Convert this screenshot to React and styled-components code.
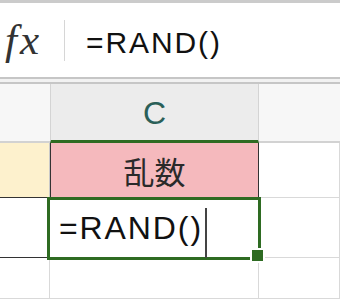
import React from 'react';
import styled, { createGlobalStyle } from 'styled-components';

const GREEN = '#2e6b22';

const Global = createGlobalStyle`
 html, body { margin: 0; padding: 0; background: #fff; }
 body { width: 340px; height: 299px; overflow: hidden; font-family: 'Liberation Sans', Arial, sans-serif; }
`;

const Screen = styled.div`
 width: 340px;
 height: 299px;
 display: flex;
 flex-direction: column;
 overflow: hidden;
`;

const FormulaBar = styled.div`
 height: 74px;
 border-top: 3px solid #cbcbcb;
 display: flex;
 align-items: center;
 background: #fff;
`;

const FxLabel = styled.div`
 width: 60px;
 padding-left: 5px;
 box-sizing: border-box;
 font-family: 'Liberation Serif', 'DejaVu Serif', serif;
 font-style: italic;
 font-size: 43px;
 letter-spacing: 3px;
 color: #333;
 line-height: 1;
 margin-top: -2px;
`;

const Divider = styled.div`
 width: 1px;
 height: 41px;
 background: #d6d6d6;
 margin-left: 4px;
 margin-right: 21px;
`;

const FormulaText = styled.div`
 flex: 1;
 font-size: 30px;
 letter-spacing: 1.9px;
 color: #111;
 line-height: 1;
 padding-top: 5px;
`;

const BarEdge = styled.div`
 height: 3px;
 border-top: 2px solid #c6c6c6;
 border-bottom: 2px solid #c6c6c6;
 background: #f2f2f2;
`;

const Sheet = styled.div`
 flex: 1;
 display: grid;
 grid-template-columns: 50px 209px 1fr;
 grid-template-rows: 59px 55px 60px 1fr;
`;

const Head = styled.div`
 box-sizing: border-box;
 background: ${p => (p.$active ? '#ececec' : '#f7f7f7')};
 border-bottom: ${p => (p.$active ? `3px solid ${GREEN}` : '2px solid #d2d2d2')};
 border-left: ${p => (p.$active ? '1px solid #d4d4d4' : 'none')};
 border-right: ${p => (p.$active ? '1px solid #d4d4d4' : 'none')};
 display: flex;
 align-items: center;
 justify-content: center;
 font-size: 32px;
 color: #2a5f58;
 padding-top: 2px;
`;

const Cell = styled.div`
 box-sizing: border-box;
 background: ${p => p.$bg || '#fff'};
 border-right: 1px solid ${p => p.$line || '#d9d9d9'};
 border-bottom: 1px solid ${p => p.$bottom || '#d9d9d9'};
 display: flex;
 align-items: center;
 justify-content: center;
`;

const LabelCell = styled(Cell)`
 border-left: 1px solid #333;
 border-right: 1px solid #333;
 font-family: 'Noto Sans CJK JP', 'Noto Sans CJK SC', sans-serif;
 font-size: 31px;
 color: #2a2a2a;
`;

const ActiveCell = styled.div`
 position: relative;
 z-index: 1;
 margin: -1px -2px -2px -3px;
 border: 3px solid ${GREEN};
 background: #fff;
 display: flex;
 align-items: center;
 padding-left: 9px;
 font-size: 32px;
 letter-spacing: 1.9px;
 color: #111;
`;

const Caret = styled.span`
 display: inline-block;
 width: 2px;
 height: 50px;
 background: #444;
 margin-left: 2px;
 align-self: flex-end;
 margin-bottom: -1px;
`;

const Handle = styled.span`
 position: absolute;
 right: -7px;
 bottom: -6px;
 width: 11px;
 height: 11px;
 background: ${GREEN};
 border: 2px solid #fff;
`;

export default function App() {
  return (
    <Screen>
      <Global />
      <FormulaBar>
        <FxLabel>fx</FxLabel>
        <Divider />
        <FormulaText>=RAND()</FormulaText>
      </FormulaBar>
      <BarEdge />
      <Sheet>
        <Head />
        <Head $active>C</Head>
        <Head />

        <Cell $bg="#fdf1cd" $line="#c9c9c9" $bottom="#333" />
        <LabelCell $bg="#f5b9bd" $bottom="#333">乱数</LabelCell>
        <Cell />

        <Cell $line="#333" $bottom="#333" />
        <ActiveCell>
          =RAND()<Caret />
          <Handle />
        </ActiveCell>
        <Cell />

        <Cell />
        <Cell />
        <Cell />
      </Sheet>
    </Screen>
  );
}
